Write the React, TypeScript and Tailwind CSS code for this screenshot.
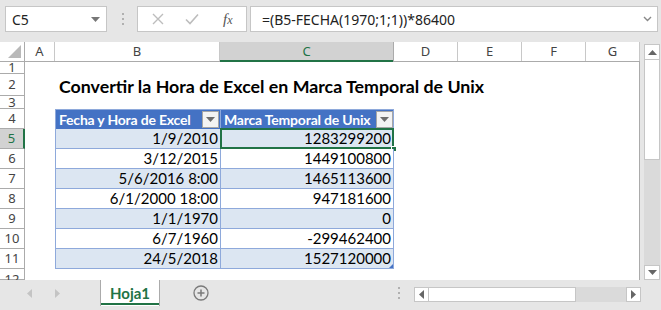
import React from "react";

type Row = { n: number; h: number; kind?: "title" | "head" | "data"; b?: string; c?: string; alt?: boolean };

const rows: Row[] = [
  { n: 1, h: 12 },
  { n: 2, h: 22, kind: "title" },
  { n: 3, h: 13 },
  { n: 4, h: 20, kind: "head", b: "Fecha y Hora de Excel", c: "Marca Temporal de Unix" },
  { n: 5, h: 20, kind: "data", b: "1/9/2010", c: "1283299200", alt: true },
  { n: 6, h: 20, kind: "data", b: "3/12/2015", c: "1449100800" },
  { n: 7, h: 20, kind: "data", b: "5/6/2016 8:00", c: "1465113600", alt: true },
  { n: 8, h: 20, kind: "data", b: "6/1/2000 18:00", c: "947181600" },
  { n: 9, h: 20, kind: "data", b: "1/1/1970", c: "0", alt: true },
  { n: 10, h: 20, kind: "data", b: "6/7/1960", c: "-299462400" },
  { n: 11, h: 20, kind: "data", b: "24/5/2018", c: "1527120000", alt: true },
  { n: 12, h: 11 },
];

const cols = [
  { l: "A", w: "w-[30px]" },
  { l: "B", w: "w-[165px]" },
  { l: "C", w: "w-[174px]" },
  { l: "D", w: "w-[64px]" },
  { l: "E", w: "w-[64px]" },
  { l: "F", w: "w-[64px]" },
  { l: "G", w: "w-[54px]" },
];

const FilterButton = () => (
  <div className="flex h-[17px] w-[17px] shrink-0 items-center justify-center border border-[#a6a6a6] bg-[#f3f3f3]">
    <svg width="9" height="5" viewBox="0 0 9 5">
      <path d="M0 0h9L4.5 5z" fill="#6d6d6d" />
    </svg>
  </div>
);

const Tri = ({ dir, color = "#6d6d6d" }: { dir: "up" | "down" | "left" | "right"; color?: string }) => {
  const d = {
    up: "M0 5h9L4.5 0z",
    down: "M0 0h9L4.5 5z",
    left: "M5 0v9L0 4.5z",
    right: "M0 0v9L5 4.5z",
  }[dir];
  const horiz = dir === "up" || dir === "down";
  return (
    <svg width={horiz ? 9 : 5} height={horiz ? 5 : 9} viewBox={horiz ? "0 0 9 5" : "0 0 5 9"}>
      <path d={d} fill={color} />
    </svg>
  );
};

const Dots = () => (
  <div className="flex flex-col gap-[3px]">
    <span className="h-[2px] w-[2px] bg-[#b0b0b0]" />
    <span className="h-[2px] w-[2px] bg-[#b0b0b0]" />
    <span className="h-[2px] w-[2px] bg-[#b0b0b0]" />
  </div>
);

function FormulaBar() {
  return (
    <div className="flex h-[36px] items-center pl-[5px] pt-[2px]">
      <div className="flex h-[26px] w-[102px] items-center justify-between border border-[#c6c6c6] bg-white pl-[6px] pr-[6px] text-[14px] text-[#222]">
        <span>C5</span>
        <Tri dir="down" color="#777" />
      </div>
      <div className="ml-[15px] mr-[13px]">
        <Dots />
      </div>
      <div className="flex h-[26px] w-[110px] items-center border border-[#c6c6c6] bg-white">
        <svg className="ml-[14px]" width="12" height="12" viewBox="0 0 12 12">
          <path d="M1 1l10 10M11 1L1 11" stroke="#bdbdbd" strokeWidth="1.4" />
        </svg>
        <svg className="ml-[21px]" width="14" height="12" viewBox="0 0 14 12">
          <path d="M1 6.5l4 4L13 1.5" stroke="#bdbdbd" strokeWidth="1.6" fill="none" />
        </svg>
        <span className="ml-[24px] font-['Liberation_Serif',serif] text-[15px] italic text-[#555]">
          f<span className="text-[12px]">x</span>
        </span>
      </div>
      <div className="ml-[3px] flex h-[26px] w-[408px] items-center justify-between border border-[#c6c6c6] bg-white pl-[11px] pr-[5px] text-[14px] text-[#222]">
        <span>=(B5-FECHA(1970;1;1))*86400</span>
        <svg width="9" height="6" viewBox="0 0 9 6">
          <path d="M1 1l3.5 3.5L8 1" stroke="#888" strokeWidth="1.4" fill="none" />
        </svg>
      </div>
    </div>
  );
}

function ColumnHeaders() {
  return (
    <div className="flex h-[20px] border-b border-[#ababab]">
      <div className="relative w-[25px] shrink-0 border-r border-[#ababab]">
        <svg className="absolute bottom-[3px] right-[3px]" width="13" height="13" viewBox="0 0 13 13">
          <path d="M13 0v13H0z" fill="#b9b9b9" />
        </svg>
      </div>
      {cols.map((c) => (
        <div
          key={c.l}
          className={
            c.l === "C"
              ? `${c.w} relative flex shrink-0 items-center justify-center border-r border-[#ababab] bg-[#d2d2d2] text-[#217346]`
              : `${c.w} flex shrink-0 items-center justify-center border-r border-[#c8c8c8] text-[#444]`
          }
        >
          {c.l}
          {c.l === "C" && <span className="absolute bottom-[-1px] left-0 right-0 h-[2px] bg-[#217346]" />}
        </div>
      ))}
    </div>
  );
}

function SheetRow({ r }: { r: Row }) {
  const selected = r.n === 5;
  const last = r.n === 12;
  return (
    <div className="flex" style={{ height: r.h }}>
      <div
        className={
          selected
            ? "relative flex w-[25px] shrink-0 items-center justify-center border-b border-r-2 border-b-[#ababab] border-r-[#217346] bg-[#d2d2d2] text-[#217346]"
            : last
              ? "flex w-[25px] shrink-0 justify-center overflow-hidden border-r border-[#ababab] pt-[4px] text-[#444]"
              : "flex w-[25px] shrink-0 items-center justify-center border-b border-r border-[#ababab] text-[#444]"
        }
      >
        <span className="leading-none">{r.n}</span>
      </div>
      <div className="w-[30px] shrink-0 bg-white" />
      {r.kind === "title" && (
        <div className="flex-1 whitespace-nowrap bg-white pl-[4px] pt-[1px] font-['Lato',sans-serif] text-[17.8px] font-bold leading-[22px] text-black">
          Convertir la Hora de Excel en Marca Temporal de Unix
        </div>
      )}
      {r.kind === "head" && (
        <>
          <div className="flex w-[165px] shrink-0 items-center justify-between whitespace-nowrap border-l border-t border-[#8ea9db] bg-[#4472c4] pl-[3px] pr-[1px] font-['Lato',sans-serif] text-[14px] font-bold tracking-[-0.2px] text-white">
            <span>{r.b}</span>
            <FilterButton />
          </div>
          <div className="flex w-[174px] shrink-0 items-center justify-between whitespace-nowrap border-l border-r border-t border-[#8ea9db] bg-[#4472c4] pl-[3px] font-['Lato',sans-serif] text-[14px] font-bold tracking-[-0.2px] text-white">
            <span>{r.c}</span>
            <FilterButton />
          </div>
          <div className="flex-1 bg-white" />
        </>
      )}
      {r.kind === "data" && (
        <>
          <div
            className={`flex w-[165px] shrink-0 items-center justify-end whitespace-nowrap border-b border-l border-[#8ea9db] pr-[2px] font-['Lato',sans-serif] text-[15px] text-black ${
              r.alt ? "bg-[#dce6f2]" : "bg-white"
            }`}
          >
            {r.b}
          </div>
          <div
            className={`relative flex w-[174px] shrink-0 items-center justify-end border-b border-l border-r border-[#8ea9db] pr-[2px] font-['Lato',sans-serif] text-[15px] text-black ${
              r.alt ? "bg-[#dce6f2]" : "bg-white"
            }`}
          >
            {r.c}
            {selected && (
              <>
                <span className="absolute -left-[1px] -top-[1px] bottom-[-1px] right-[-1px] border-2 border-[#217346]" />
                <span className="absolute -bottom-[4px] -right-[4px] h-[6px] w-[6px] border border-white bg-[#217346]" />
              </>
            )}
            {r.n === 11 && (
              <svg className="absolute bottom-0 right-0" width="4" height="4" viewBox="0 0 4 4">
                <path d="M4 0v4H0z" fill="#4472c4" />
              </svg>
            )}
          </div>
          <div className="flex-1 bg-white" />
        </>
      )}
      {!r.kind && <div className="flex-1 bg-white" />}
    </div>
  );
}

function VScroll() {
  return (
    <div className="flex w-[21px] flex-col pl-[4px] pr-[1px] pt-[2px]">
      <div className="flex h-[16px] items-center justify-center border border-[#c6c6c6] bg-white">
        <Tri dir="up" color="#666" />
      </div>
      <div className="h-[100px] border-x border-b border-[#c6c6c6] bg-white" />
      <div className="flex-1 bg-[#dadada]" />
      <div className="flex h-[15px] items-center justify-center border border-[#c6c6c6] bg-white">
        <Tri dir="down" color="#666" />
      </div>
    </div>
  );
}

function TabBar() {
  return (
    <div className="flex h-[30px]">
      <div className="flex h-[26px] w-[100px] items-center pl-[27px]">
        <Tri dir="left" color="#c4c4c4" />
        <span className="ml-[23px]">
          <Tri dir="right" color="#c4c4c4" />
        </span>
      </div>
      <div className="relative flex h-[26px] w-[60px] items-center justify-center border-x border-[#ababab] bg-white font-['Lato',sans-serif] text-[15px] font-bold text-[#217346]">
        Hoja1
        <span className="absolute bottom-[1px] left-0 right-0 h-[2px] bg-[#217346]" />
      </div>
      <div className="flex h-[26px] items-center pl-[33px]">
        <svg width="16" height="16" viewBox="0 0 16 16">
          <circle cx="8" cy="8" r="7" stroke="#7a7a7a" strokeWidth="1.3" fill="none" />
          <path d="M8 4.5v7M4.5 8h7" stroke="#7a7a7a" strokeWidth="1.5" />
        </svg>
      </div>
      <div className="ml-[189px] flex h-[26px] items-center">
        <Dots />
      </div>
      <div className="ml-[14px] mt-[7px] flex h-[15px]">
        <div className="flex w-[15px] items-center justify-center border border-[#c6c6c6] bg-white">
          <Tri dir="left" color="#666" />
        </div>
        <div className="w-[147px] border-y border-r border-[#c6c6c6] bg-white" />
        <div className="w-[50px] bg-[#dadada]" />
        <div className="flex w-[15px] items-center justify-center border border-[#c6c6c6] bg-white">
          <Tri dir="right" color="#666" />
        </div>
      </div>
    </div>
  );
}

export default function App() {
  return (
    <div className="h-[310px] w-[661px] overflow-hidden bg-[#e6e6e6] font-['Noto_Sans',sans-serif] text-[13px]">
      <FormulaBar />
      <div className="mt-[6px] flex h-[238px]">
        <div className="flex w-[640px] flex-col border-b border-r border-[#ababab] bg-white">
          <ColumnHeaders />
          {rows.map((r) => (
            <SheetRow key={r.n} r={r} />
          ))}
        </div>
        <VScroll />
      </div>
      <TabBar />
    </div>
  );
}
